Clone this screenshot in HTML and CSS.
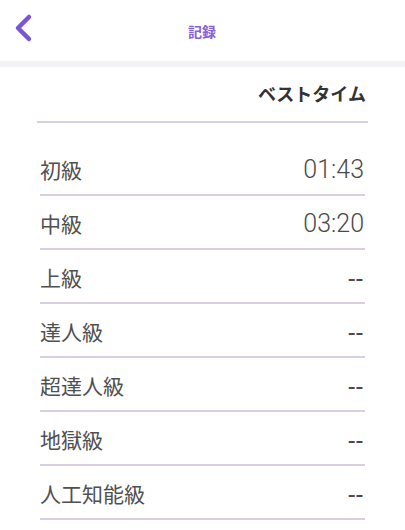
FILE: index.html
```html
<!DOCTYPE html>
<html lang="ja">
<head>
<meta charset="utf-8">
<title>記録</title>
<link rel="stylesheet" href="styles.css">
</head>
<body>
<header class="topbar">
  <button class="back" aria-label="戻る">
    <svg width="20" height="30" viewBox="0 0 20 30"><path d="M15 4 L4 15 L15 26" fill="none" stroke="#7a55d6" stroke-width="4.5" stroke-linecap="round" stroke-linejoin="round"/></svg>
  </button>
  <h1 class="title">記録</h1>
</header>
<div class="band"></div>
<main class="records">
  <div class="records-head">ベストタイム</div>
  <ul class="rows">
    <li class="row"><span class="label">初級</span><span class="time">01:43</span></li>
    <li class="row"><span class="label">中級</span><span class="time">03:20</span></li>
    <li class="row"><span class="label">上級</span><span class="time dash">--</span></li>
    <li class="row"><span class="label">達人級</span><span class="time dash">--</span></li>
    <li class="row"><span class="label">超達人級</span><span class="time dash">--</span></li>
    <li class="row"><span class="label">地獄級</span><span class="time dash">--</span></li>
    <li class="row"><span class="label">人工知能級</span><span class="time dash">--</span></li>
  </ul>
</main>
</body>
</html>
```
FILE: styles.css
```css
* { box-sizing: border-box; }
html, body { margin: 0; padding: 0; background: #fff; }
body {
  font-family: "Noto Sans CJK JP", "Noto Sans", sans-serif;
  color: #4d4d4d;
}
.topbar {
  height: 61px;
  display: flex;
  align-items: center;
  justify-content: center;
  position: relative;
}
.back {
  position: absolute;
  left: 14px;
  top: 13px;
  width: 20px;
  height: 30px;
  padding: 0;
  border: 0;
  background: none;
  display: flex;
}
.title {
  margin: 0;
  font-size: 14px;
  font-weight: 700;
  color: #8561d8;
  line-height: 1;
  padding-top: 1px;
  padding-right: 1px;
}
.band {
  height: 6px;
  background: #f3f2f7;
}
.records {
  padding: 0;
}
.records-head {
  margin: 0 37px;
  height: 56px;
  border-bottom: 2px solid #d9cfe0;
  display: flex;
  align-items: center;
  justify-content: flex-end;
  padding-right: 2px;
  font-size: 18px;
  font-weight: 700;
  color: #333;
  padding-bottom: 2px;
}
.rows {
  list-style: none;
  margin: 19px 40px 0;
  padding: 0;
}
.row {
  height: 54px;
  border-bottom: 2px solid #d9cfe0;
  display: flex;
  align-items: center;
  justify-content: space-between;
}
.label {
  font-size: 21px;
  font-weight: 400;
  color: #505050;
  padding-top: 1px;
}
.time {
  font-family: Roboto, "Noto Sans", sans-serif;
  font-weight: 300;
  font-size: 25px;
  color: #4a4a4a;
  padding-top: 2px;
  padding-right: 1px;
}
.dash {
  font-weight: 400;
  letter-spacing: 1px;
  padding-top: 6px;
}
```
